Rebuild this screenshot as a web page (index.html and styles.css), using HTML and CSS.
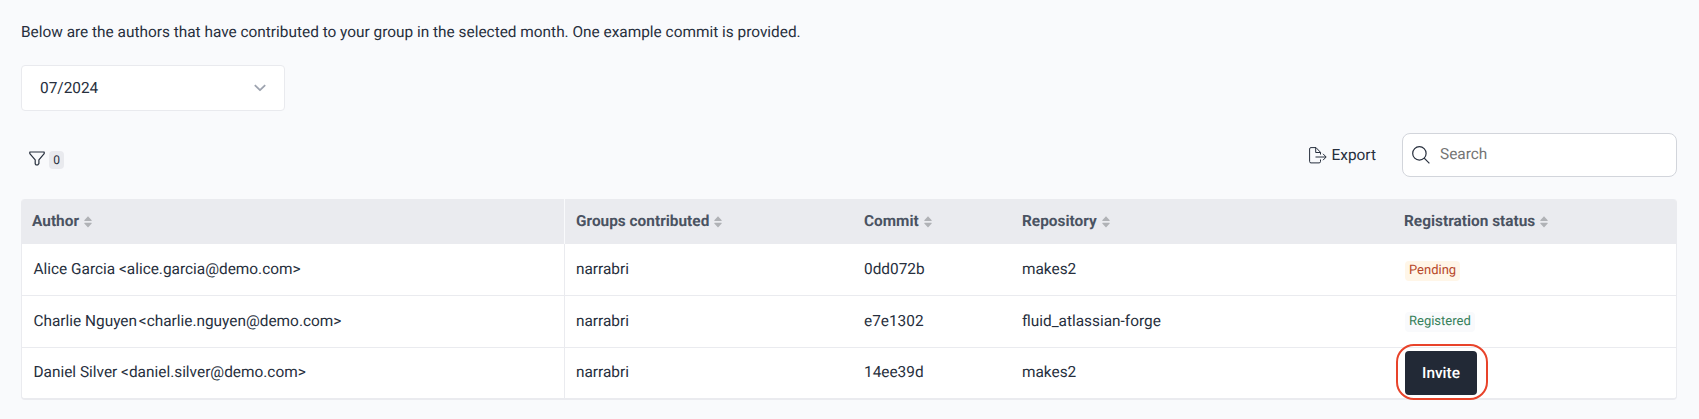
FILE: index.html
```html
<!DOCTYPE html>
<html lang="en">
<head>
    <meta charset="UTF-8">
    <meta name="viewport" content="width=device-width, initial-scale=1.0">
    <title>Authors</title>
    <link rel="stylesheet" href="styles.css">
</head>
<body>
    <!-- sort arrows shared by every column header -->
    <svg class="sprite" width="0" height="0">
        <symbol id="sort" viewBox="0 0 8 12">
            <path d="M4 0.3 7.7 4.2Q8 5 7.2 5H0.8Q0 5 0.3 4.2ZM4 11.5 7.7 7.6Q8 6.8 7.2 6.8H0.8Q0 6.8 0.3 7.6Z" />
        </symbol>
    </svg>

    <main class="page">
        <p class="intro">Below are the authors that have contributed to your group in the selected month. One example commit is provided.</p>

        <div class="select">
            <span>07/2024</span>
            <svg class="chevron" viewBox="0 0 12 8" width="12" height="8"><path d="M0.8 1.2 6 6.2 11.2 1.2" /></svg>
        </div>

        <div class="toolbar">
            <div class="filter">
                <svg class="icon" viewBox="0 0 16 15" width="16" height="15"><path d="M0.8 1H15.2V2.6L9.9 8.8V12.6L8.6 14H7.2L6.2 12.8V8.8L0.8 2.6Z" /></svg>
                <span class="badge">0</span>
            </div>
            <div class="actions">
                <button class="export">
                    <svg class="icon thin" viewBox="0 0 18 17" width="18" height="17"><path d="M11.5 12.5V14.5Q11.5 15.9 10.1 15.9H2Q0.6 15.9 0.6 14.5V2Q0.6 0.6 2 0.6H7L11.5 5.3V7.5M6.7 0.6V5.5H11.5M6.5 10H17M14 6.8 17.2 10 14 13.2" /></svg>
                    Export
                </button>
                <label class="search">
                    <svg class="icon" viewBox="0 0 18 18" width="18" height="18"><circle cx="7.4" cy="7.4" r="6.7" /><path d="M12.2 12.2 17.4 17.4" /></svg>
                    <input type="text" placeholder="Search">
                </label>
            </div>
        </div>

        <table class="table">
            <colgroup>
                <col class="col-author">
                <col class="col-groups">
                <col class="col-commit">
                <col class="col-repository">
                <col>
            </colgroup>
            <thead>
                <tr>
                    <th>Author<svg class="sort"><use href="#sort" /></svg></th>
                    <th>Groups contributed<svg class="sort"><use href="#sort" /></svg></th>
                    <th>Commit<svg class="sort"><use href="#sort" /></svg></th>
                    <th>Repository<svg class="sort"><use href="#sort" /></svg></th>
                    <th>Registration status<svg class="sort"><use href="#sort" /></svg></th>
                </tr>
            </thead>
            <tbody>
                <tr>
                    <td>Alice Garcia &lt;alice.garcia@demo.com&gt;</td>
                    <td>narrabri</td>
                    <td>0dd072b</td>
                    <td>makes2</td>
                    <td><span class="tag pending">Pending</span></td>
                </tr>
                <tr>
                    <td>Charlie Nguyen <span class="email">&lt;charlie.nguyen@demo.com&gt;</span></td>
                    <td>narrabri</td>
                    <td>e7e1302</td>
                    <td>fluid_atlassian-forge</td>
                    <td><span class="tag registered">Registered</span></td>
                </tr>
                <tr>
                    <td>Daniel Silver &lt;daniel.silver@demo.com&gt;</td>
                    <td>narrabri</td>
                    <td>14ee39d</td>
                    <td>makes2</td>
                    <td><button class="invite">Invite</button></td>
                </tr>
            </tbody>
        </table>
    </main>
</body>
</html>
```
FILE: styles.css
```css
* {
    box-sizing: border-box;
}

body {
    margin: 0;
    background-color: #f9fafc;
    color: #272f3d;
    font-family: Roboto, sans-serif;
    font-size: 15.4px;
    line-height: 24px;
    text-rendering: geometricPrecision;
}

button,
input {
    font: inherit;
    color: inherit;
    border: none;
    background: none;
    padding: 0;
    text-rendering: inherit;
}

.sprite {
    position: absolute;
}

.page {
    padding: 20px 22px 0 21px;
}

.intro {
    margin: 0 0 21px;
}

.select {
    display: flex;
    align-items: center;
    justify-content: space-between;
    width: 264px;
    height: 46px;
    padding: 0 18px;
    background-color: #fff;
    border: 1px solid #e9eaee;
    border-radius: 4px;
}

.icon,
.chevron {
    fill: none;
    stroke: #272f3d;
    stroke-width: 1.2;
    stroke-linejoin: round;
    flex-shrink: 0;
}

.chevron {
    stroke: #9da3af;
    stroke-width: 1.8;
}

.thin {
    stroke-width: 1;
}

.toolbar {
    display: flex;
    justify-content: space-between;
    margin: 22px 0;
}

.filter {
    display: flex;
    align-items: center;
    gap: 4px;
    height: 18px;
    margin: 18px 0 0 8px;
}

.filter .icon {
    margin-bottom: 3px;
}

.badge {
    width: 15px;
    height: 18px;
    background-color: #e9eaee;
    border-radius: 4px;
    font-size: 12px;
    line-height: 18px;
    text-align: center;
}

.actions {
    display: flex;
    align-items: center;
    gap: 26px;
}

.export {
    display: flex;
    align-items: center;
    gap: 5px;
}

.search {
    display: flex;
    align-items: center;
    gap: 10px;
    width: 275px;
    height: 44px;
    padding: 0 9px;
    background-color: #fff;
    border: 1px solid #d2d5db;
    border-radius: 8px;
}

.search input {
    width: 200px;
    padding-bottom: 2px;
    outline: none;
}

.search input::placeholder {
    color: #757575;
}

.table {
    width: 100%;
    table-layout: fixed;
    border-collapse: separate;
    border-spacing: 0;
    background-color: #fff;
    border: 1px solid #eaebef;
    border-width: 0 1px 2px;
    border-radius: 4px;
}

.col-author {
    width: 543px;
}

.col-groups {
    width: 288px;
}

.col-commit {
    width: 158px;
}

.col-repository {
    width: 382px;
}

th {
    height: 45px;
    padding: 0 11px 2px;
    background-color: #eaebef;
    color: #4a5362;
    font-weight: 700;
    text-align: left;
}

th:first-child {
    padding-left: 10px;
    border-right: 1px solid #f9fafc;
    border-top-left-radius: 3px;
}

th:last-child {
    border-top-right-radius: 3px;
}

td {
    height: 52px;
    padding: 0 11px 2px;
    border-bottom: 1px solid #eaebef;
}

td:first-child {
    padding-left: 11.5px;
    border-right: 1px solid #eaebef;
}

tr:last-child td {
    height: 50px;
    border-bottom: none;
}

.email {
    margin-left: -2px;
}

.sort {
    width: 8px;
    height: 12px;
    margin-left: 5px;
    vertical-align: -2px;
    fill: #b0b2b6;
}

.tag {
    display: inline-block;
    height: 20px;
    margin-left: 1px;
    padding: 0 4px;
    border-radius: 4px;
    font-size: 13px;
    line-height: 20px;
}

.pending {
    background-color: #fff6e8;
    color: #b7482a;
}

.registered {
    margin-bottom: 2px;
    background-color: #f9fafc;
    color: #35805a;
}

td .invite {
    margin: 2px 0 0 1px;
}

/* red ring sits outside the button without changing the row height */
.invite {
    position: relative;
    display: block;
    width: 72px;
    height: 44px;
    background-color: #222936;
    color: #fff;
    border-radius: 4px;
    font-weight: 500;
}

.invite::after {
    content: "";
    position: absolute;
    inset: -7px -11px -5px -9px;
    border: 2px solid #e8432a;
    border-radius: 18px;
}
```
